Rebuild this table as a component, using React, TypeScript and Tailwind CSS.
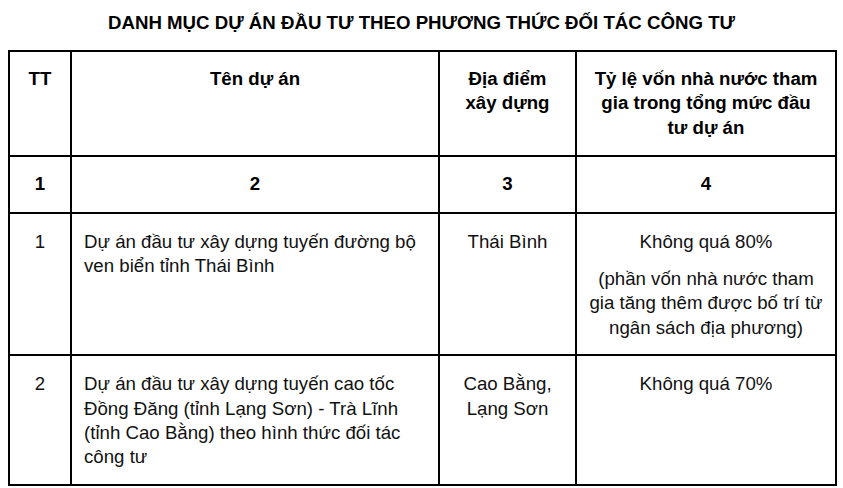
const rows = [
  {
    tt: "1",
    name: "Dự án đầu tư xây dựng tuyến đường bộ ven biển tỉnh Thái Bình",
    place: ["Thái Bình"],
    ratio: "Không quá 80%",
    note: "(phần vốn nhà nước tham gia tăng thêm được bố trí từ ngân sách địa phương)",
  },
  {
    tt: "2",
    name: "Dự án đầu tư xây dựng tuyến cao tốc Đồng Đăng (tỉnh Lạng Sơn) - Trà Lĩnh (tỉnh Cao Bằng) theo hình thức đối tác công tư",
    place: ["Cao Bằng,", "Lạng Sơn"],
    ratio: "Không quá 70%",
    note: "",
  },
];

const head = "border-2 border-black align-top px-3 pt-[15px] pb-[15px]";
const cell = "border-2 border-black align-top px-3 pt-[16px] pb-[14px]";

export default function App() {
  return (
    <div className="bg-white w-[843px] h-[488px] px-2 pt-[11px] font-['Liberation_Sans',Arial,sans-serif] text-[18.67px] leading-[24.4px] text-[#111]">
      <h1 className="text-center font-bold text-[18.67px] leading-6 text-black">
        DANH MỤC DỰ ÁN ĐẦU TƯ THEO PHƯƠNG THỨC ĐỐI TÁC CÔNG TƯ
      </h1>
      <table className="mt-[15px] w-[827px] table-fixed border-collapse">
        <colgroup>
          <col className="w-[62px]" />
          <col className="w-[368px]" />
          <col className="w-[137px]" />
          <col className="w-[260px]" />
        </colgroup>
        <thead>
          <tr className="font-bold text-black">
            <th className={head}>TT</th>
            <th className={head}>Tên dự án</th>
            <th className={head}>
              Địa điểm
              <br />
              xây dựng
            </th>
            <th className={head}>
              Tỷ lệ vốn nhà nước tham gia trong tổng mức đầu tư dự án
            </th>
          </tr>
          <tr className="font-bold text-black">
            <th className={head}>1</th>
            <th className={head}>2</th>
            <th className={head}>3</th>
            <th className={head}>4</th>
          </tr>
        </thead>
        <tbody>
          {rows.map((row) => (
            <tr key={row.tt}>
              <td className={cell + " text-center"}>{row.tt}</td>
              <td className={cell + " pr-4"}>{row.name}</td>
              <td className={cell + " text-center"}>
                {row.place.map((p) => (
                  <div key={p}>{p}</div>
                ))}
              </td>
              <td className={cell + " text-center"}>
                <p>{row.ratio}</p>
                {row.note && <p className="mt-[13px]">{row.note}</p>}
              </td>
            </tr>
          ))}
        </tbody>
      </table>
    </div>
  );
}
